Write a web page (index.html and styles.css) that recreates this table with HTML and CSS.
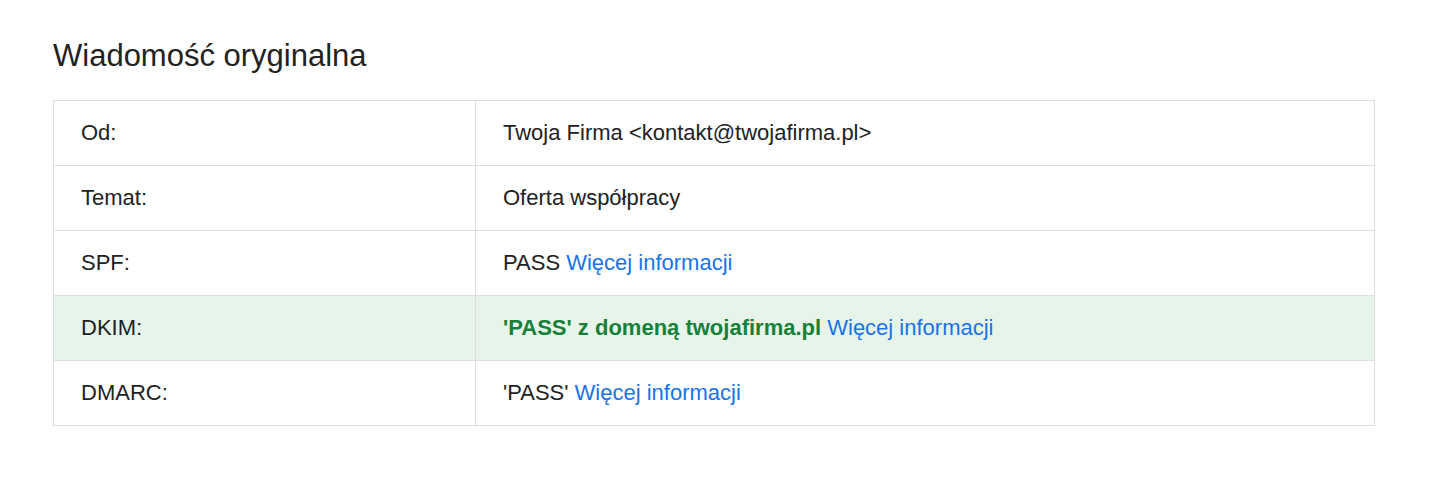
FILE: index.html
```html
<!DOCTYPE html>
<html lang="pl">
<head>
  <meta charset="UTF-8" />
  <title>Wiadomość oryginalna</title>
  <link rel="stylesheet" href="styles.css">
</head>
<body>
  <div class="page">
    <h1>Wiadomość oryginalna</h1>

    <table class="headers">
      <tbody>
        <tr>
          <td class="label">Od:</td>
          <td>Twoja Firma &lt;kontakt@twojafirma.pl&gt;</td>
        </tr>
        <tr>
          <td class="label">Temat:</td>
          <td>Oferta współpracy</td>
        </tr>
        <tr>
          <td class="label">SPF:</td>
          <td>PASS <a href="#">Więcej informacji</a></td>
        </tr>
        <tr class="ok-row">
          <td class="label">DKIM:</td>
          <td><strong class="ok">'PASS' z domeną twojafirma.pl</strong> <a href="#">Więcej informacji</a></td>
        </tr>
        <tr>
          <td class="label">DMARC:</td>
          <td>'PASS' <a href="#">Więcej informacji</a></td>
        </tr>
      </tbody>
    </table>
  </div>
</body>
</html>
```

FILE: styles.css
```css
body {
  font-family: "Liberation Sans", Arial, sans-serif;
  background: #fff;
  color: #222;
  margin: 0;
  padding: 0;
}

.page {
  padding: 36px 65px 0 53px;
}

h1 {
  font-size: 31px;
  font-weight: normal;
  line-height: 40px;
  margin: 0 0 24px;
  color: #222;
}

.headers {
  width: 100%;
  border-collapse: collapse;
  font-size: 22px;
}

.headers td {
  border: 1px solid #ddd;
  padding: 20px 27px;
  line-height: 24px;
  text-align: left;
}

.headers td.label {
  width: 367px;
}

.headers a {
  color: #1a73e8;
  text-decoration: none;
}

.ok-row td {
  background-color: #e6f4ea;
}

.ok {
  color: #188038;
}
```
